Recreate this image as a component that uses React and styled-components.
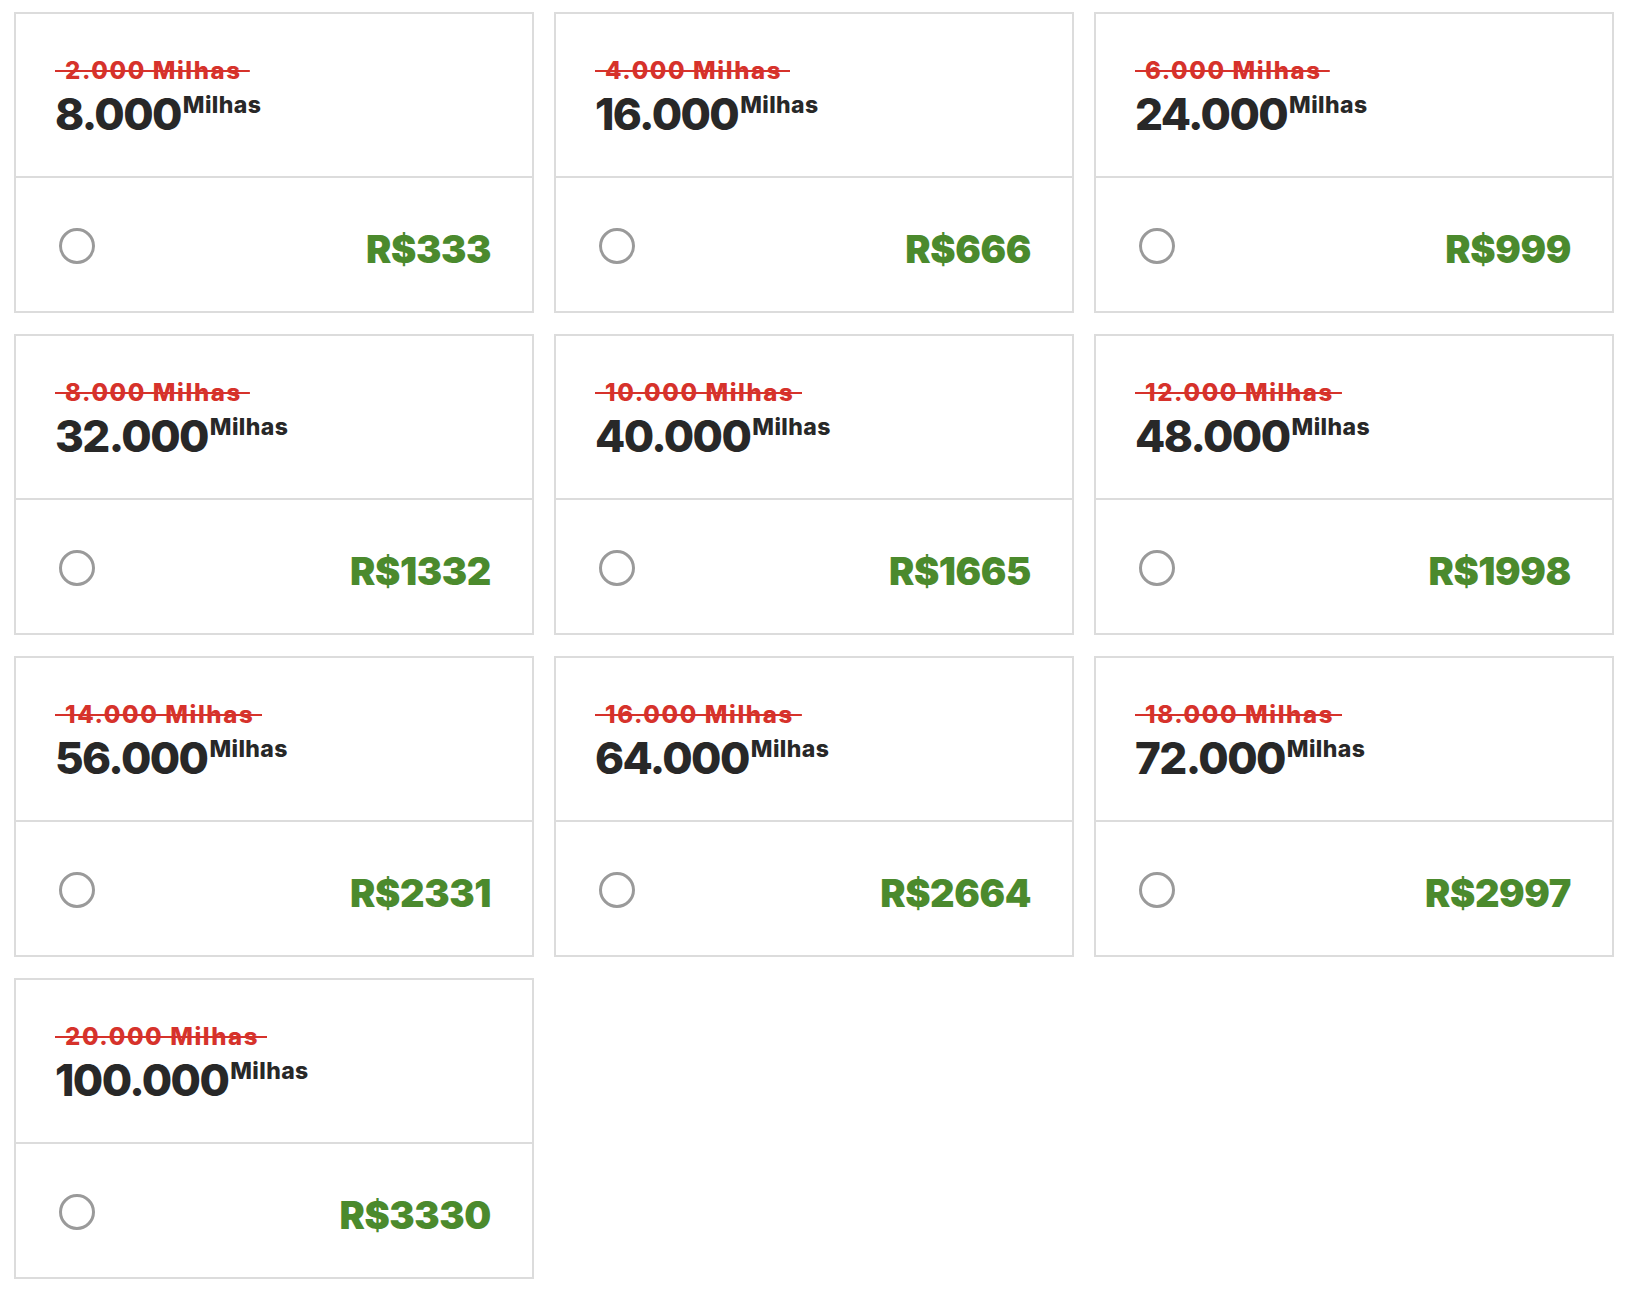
import React from "react";
import styled, { createGlobalStyle } from "styled-components";

const GlobalStyle = createGlobalStyle`
  html, body {
    margin: 0;
    padding: 0;
    background: #ffffff;
  }
  body {
    font-family: Inter, "Open Sans", "Liberation Sans", sans-serif;
  }
  * { box-sizing: border-box; }
`;

const Grid = styled.div`
  display: grid;
  grid-template-columns: repeat(3, 520px);
  column-gap: 20px;
  row-gap: 21px;
  padding: 12px 22px 30px 14px;
`;

const Card = styled.label`
  display: flex;
  flex-direction: column;
  height: 301px;
  border: 2px solid #dcdcdc;
  background: #ffffff;
  cursor: pointer;
`;

const Top = styled.div`
  height: 164px;
  border-bottom: 2px solid #dcdcdc;
  padding: 45px 40px 0 39px;
  display: flex;
  flex-direction: column;
  align-items: flex-start;
`;

const OldMiles = styled.span`
  display: inline-block;
  font-size: 24px;
  line-height: 1;
  font-weight: 800;
  letter-spacing: 1.6px;
  color: #d6322b;
  padding: 0 8px 0 10px;
  background: linear-gradient(#d6322b, #d6322b) no-repeat center / 100% 2px;
`;

const MilesRow = styled.div`
  display: flex;
  align-items: flex-start;
  margin-top: 9px;
  color: #282828;
`;

const Amount = styled.span`
  font-size: 44px;
  line-height: 1;
  font-weight: 800;
  letter-spacing: -1.6px;
`;

const Unit = styled.span`
  font-size: 23px;
  line-height: 1;
  font-weight: 800;
  margin-top: 2px;
  margin-left: 2px;
  letter-spacing: 0.4px;
`;

const Bottom = styled.div`
  flex: 1;
  display: flex;
  align-items: center;
  justify-content: space-between;
  padding: 3px 41px 0 43px;
`;

const Radio = styled.span`
  width: 36px;
  height: 36px;
  border-radius: 50%;
  border: 3.5px solid #9a9a9a;
  background: #ffffff;
`;

const Price = styled.span`
  margin-top: 6px;
  font-size: 38px;
  line-height: 1;
  font-weight: 900;
  color: #4b8a2d;
  letter-spacing: -0.4px;
`;

const plans = [
  { old: "2.000", miles: "8.000", price: "333" },
  { old: "4.000", miles: "16.000", price: "666" },
  { old: "6.000", miles: "24.000", price: "999" },
  { old: "8.000", miles: "32.000", price: "1332" },
  { old: "10.000", miles: "40.000", price: "1665" },
  { old: "12.000", miles: "48.000", price: "1998" },
  { old: "14.000", miles: "56.000", price: "2331" },
  { old: "16.000", miles: "64.000", price: "2664" },
  { old: "18.000", miles: "72.000", price: "2997" },
  { old: "20.000", miles: "100.000", price: "3330" },
];

export default function App() {
  return (
    <>
      <GlobalStyle />
      <Grid>
        {plans.map((p) => (
          <Card key={p.miles}>
            <Top>
              <OldMiles>{p.old} Milhas</OldMiles>
              <MilesRow>
                <Amount>{p.miles}</Amount>
                <Unit>Milhas</Unit>
              </MilesRow>
            </Top>
            <Bottom>
              <Radio />
              <Price>R${p.price}</Price>
            </Bottom>
          </Card>
        ))}
      </Grid>
    </>
  );
}
